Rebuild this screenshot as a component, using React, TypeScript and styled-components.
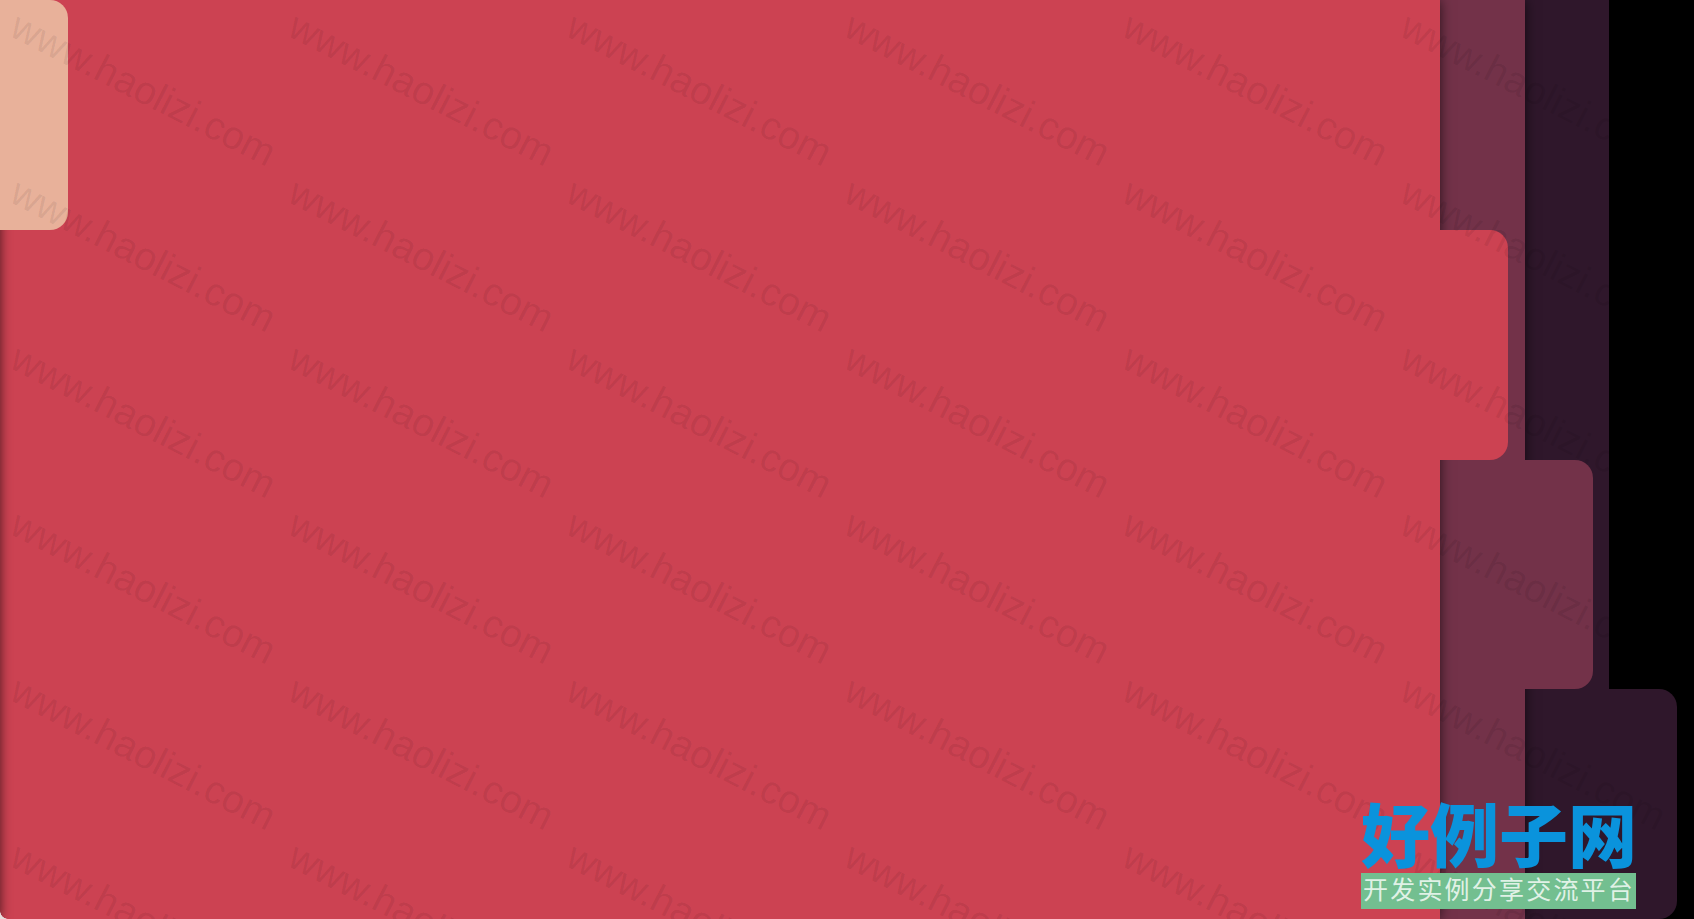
import styled, { createGlobalStyle } from "styled-components";

const GlobalStyle = createGlobalStyle`
    html, body, #root {
        margin: 0;
        height: 100%;
        background: #000;
        overflow: hidden;
    }
`

type sheetProps = {
    $width: number,
    $color: string,
    $row: number,
    $offset?: number
}

const sheets = [
    { width: 1609, color: "#2f172b", row: 4, offset: 0 },
    { width: 1525, color: "#733249", row: 3, offset: 0 },
    { width: 1440, color: "#cc4252", row: 2, offset: 0 },
    // this one sits off the page, only its tab and shadow show
    { width: 20, color: "#e8b19a", row: 1, offset: 20 },
]

function Watermarks(){
    const marks = []
    for(let i = 0; i < 42; i++){
        marks.push(<Mark key={i}>www.haolizi.com</Mark>)
    }
    return <MarkLayer>{marks}</MarkLayer>
}

export default function App(){
    return(
        <>
            <GlobalStyle/>
            <Stage>
                {sheets.map((s) => (
                    <Sheet key={s.row} $width={s.width} $color={s.color} $row={s.row} $offset={s.offset}>
                        <Tab $width={s.width} $color={s.color} $row={s.row}/>
                    </Sheet>
                ))}
                <Corner/>
                <Watermarks/>
                <Logo>
                    <LogoTitle>好例子网</LogoTitle>
                    <LogoBar>开发实例分享交流平台</LogoBar>
                </Logo>
            </Stage>
        </>
    )
}

const Stage = styled.main`
    display: grid;
    width: 100%;
    height: 919px;
    position: relative;
    overflow: hidden;
    background: #000;
    & > * {
        grid-area: 1 / 1;
    }
`

const Sheet = styled.section<sheetProps>`
    display: grid;
    grid-template-rows: 230px 230px 229px 230px;
    width: ${(p) => p.$width}px;
    height: 919px;
    margin-left: ${(p) => -(p.$offset || 0)}px;
    background: ${(p) => p.$color};
    box-shadow: 0 0 12px rgba(0, 0, 0, 0.65);
`

const Tab = styled.div<sheetProps>`
    grid-row: ${(p) => p.$row};
    width: ${(p) => p.$width + 68}px;
    background: ${(p) => p.$color};
    border-radius: 0 18px 18px 0;
`

const Corner = styled.div`
    position: absolute;
    left: 0;
    bottom: 0;
    width: 8px;
    height: 8px;
    background: radial-gradient(circle at 100% 0, transparent 7.5px, #e6dcdc 8px);
`

const MarkLayer = styled.div`
    position: absolute;
    top: -9px;
    left: 4px;
    display: grid;
    grid-template-columns: repeat(7, 278px);
    grid-auto-rows: 166px;
    pointer-events: none;
`

const Mark = styled.span`
    font-family: "Liberation Sans", Arial, sans-serif;
    font-size: 39.4px;
    line-height: 44px;
    color: rgba(0, 0, 0, 0.075);
    white-space: nowrap;
    transform-origin: 0 0;
    transform: translate(20px, 12px) rotate(27deg);
`

const Logo = styled.div`
    position: absolute;
    left: 1361px;
    top: 796px;
    width: 275px;
    display: flex;
    flex-direction: column;
    gap: 4px;
`

const LogoTitle = styled.div`
    font-family: "Noto Sans CJK SC", sans-serif;
    font-weight: 900;
    font-size: 69px;
    line-height: 73px;
    letter-spacing: 0;
    color: #0a93dc;
    white-space: nowrap;
`

const LogoBar = styled.div`
    height: 36px;
    background: #73bf90;
    font-family: "Noto Sans CJK SC", sans-serif;
    font-size: 25px;
    line-height: 31px;
    letter-spacing: 2.2px;
    color: rgba(255, 255, 255, 0.8);
    white-space: nowrap;
    overflow: hidden;
    padding-left: 2px;
`
